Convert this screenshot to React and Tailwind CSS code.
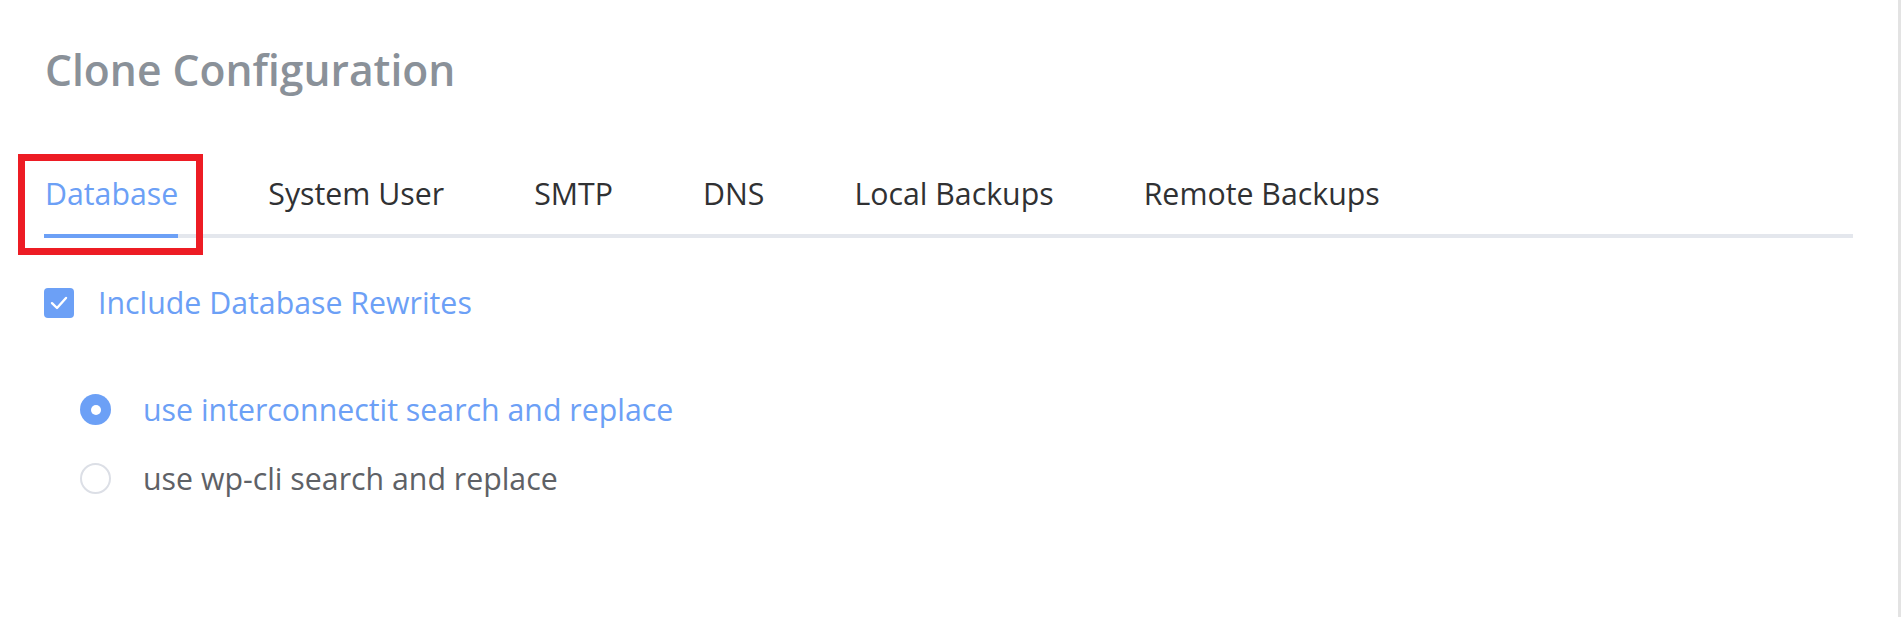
import { useState } from "react";

const TABS = ["Database", "System User", "SMTP", "DNS", "Local Backups", "Remote Backups"];

const RADIOS = [
    { key: "interconnectit", label: "use interconnectit search and replace" },
    { key: "wpcli", label: "use wp-cli search and replace" },
];

export default function App() {
    const [tab, setTab] = useState("Database");
    const [rewrites, setRewrites] = useState(true);
    const [mode, setMode] = useState("interconnectit");

    return (
        <div className="relative h-[617px] bg-white border-r-[3px] border-[#e3e3e3] pl-[44px] pr-[45px] pt-[48px] font-['Open_Sans','Noto_Sans',sans-serif]">
            {/* Title */}
            <h1 className="pl-[1px] text-[42.6px] leading-[42px] font-semibold text-[#8a9199]">
                Clone Configuration
            </h1>

            {/* Tabs */}
            <div className="mt-[62px] flex border-b-[4px] border-[#e4e7ed]">
                {TABS.map((t, i) => (
                    <button
                        key={t}
                        onClick={() => setTab(t)}
                        className={`h-[86px] -mb-[4px] flex ${i === 0 ? "pl-0 pr-[45px]" : "px-[45px]"}`}
                    >
                        <span className={`h-full pt-[2px] leading-[80px] text-[30.3px] border-b-[4px]
                            ${i === 0 ? "pl-[1px]" : ""}
                            ${tab === t
                                ? "text-[#6ca0f6] border-[#6ca0f6]"
                                : "text-[#303133] border-transparent"}`}>
                            {t}
                        </span>
                    </button>
                ))}
            </div>

            {/* Checkbox */}
            <label className="mt-[49px] flex items-center h-[31px] cursor-pointer" onClick={() => setRewrites(!rewrites)}>
                <span className={`w-[30px] h-[30px] rounded-[4px] flex items-center justify-center
                    ${rewrites ? "bg-[#6ca0f6]" : "bg-white border-2 border-[#dcdfe6]"}`}>
                    {rewrites && (
                        <svg width="18" height="14" viewBox="0 0 18 14" fill="none">
                            <path d="M2 7.2 L7 12 L16 2" stroke="white" strokeWidth="2.4" strokeLinecap="round" strokeLinejoin="round" />
                        </svg>
                    )}
                </span>
                <span className={`ml-[24px] text-[30.3px] leading-[31px] ${rewrites ? "text-[#6ca0f6]" : "text-[#606266]"}`}>
                    Include Database Rewrites
                </span>
            </label>

            {/* Radios */}
            <div className="mt-[76px] pl-[36px] flex flex-col gap-[38px]">
                {RADIOS.map(r => (
                    <label key={r.key} className="flex items-center h-[31px] cursor-pointer" onClick={() => setMode(r.key)}>
                        <span className={`w-[31px] h-[31px] rounded-full flex items-center justify-center
                            ${mode === r.key ? "bg-[#6ca0f6]" : "bg-white border-2 border-[#dcdfe6]"}`}>
                            {mode === r.key && <span className="w-[10px] h-[10px] rounded-full bg-white" />}
                        </span>
                        <span className={`ml-[32px] text-[30.3px] leading-[31px] ${mode === r.key ? "text-[#6ca0f6]" : "text-[#5e6166]"}`}>
                            {r.label}
                        </span>
                    </label>
                ))}
            </div>

            {/* annotation box */}
            <div className="absolute left-[18px] top-[154px] w-[185px] h-[101px] border-[7px] border-[#ed1c24] pointer-events-none" />
        </div>
    );
}
